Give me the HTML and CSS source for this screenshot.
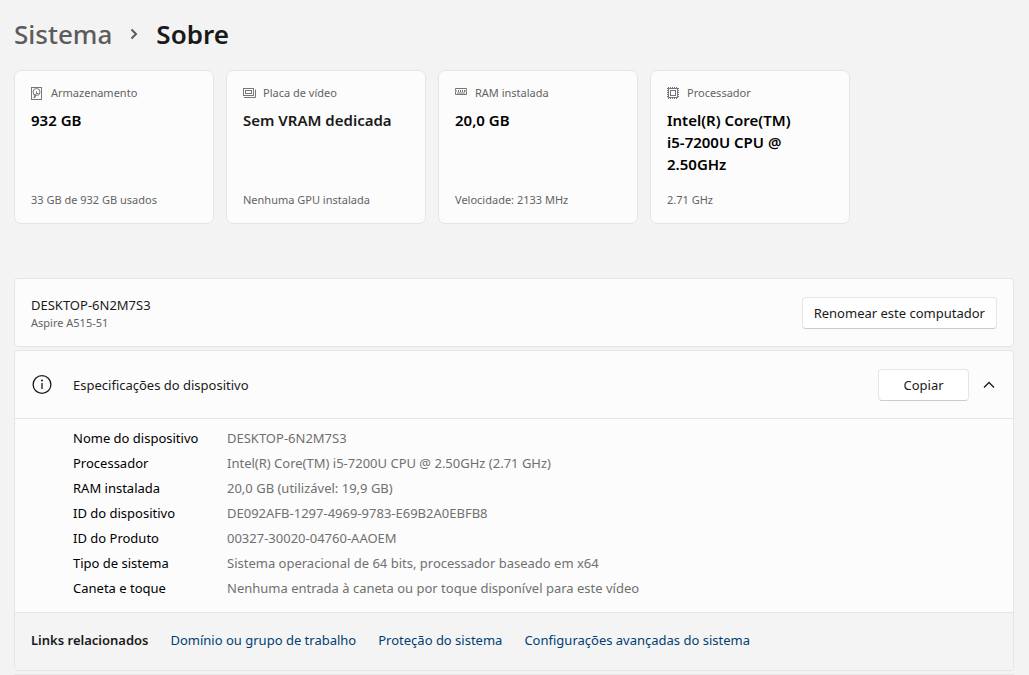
FILE: index.html
```html
<!DOCTYPE html>
<html lang="pt-BR">
<head>
  <meta charset="UTF-8" />
  <meta name="viewport" content="width=device-width, initial-scale=1.0" />
  <title>Sistema - Sobre</title>
  <link rel="stylesheet" href="styles.css">
</head>
<body>
  <main class="page">
    <header class="breadcrumb">
      <a class="breadcrumb-parent" href="#">Sistema</a>
      <svg class="breadcrumb-arrow" width="10" height="14" viewBox="0 0 10 14" aria-hidden="true">
        <path d="M2.5 2.5 7 7l-4.5 4.5" />
      </svg>
      <h1>Sobre</h1>
    </header>

    <section class="cards" aria-label="Resumo do hardware">
      <article class="card">
        <p class="card-label">
          <svg class="card-icon" width="12" height="14" viewBox="0 0 12 14" aria-hidden="true">
            <rect x="0.5" y="1.5" width="10" height="12" />
            <circle cx="5.5" cy="6" r="3.5" />
            <path d="M5.5 5.5v2h2M5.5 7.5 2.5 12M2.500 8.500l2 1.500-1 2" />
          </svg>
          Armazenamento
        </p>
        <h2>932 GB</h2>
        <p class="card-note">33 GB de 932 GB usados</p>
      </article>
      <article class="card">
        <p class="card-label">
          <svg class="card-icon" width="12" height="14" viewBox="0 0 12 14" aria-hidden="true">
            <rect x="0.5" y="2.5" width="10" height="7" />
            <rect x="2.5" y="4.5" width="6" height="3" />
            <path d="M1 11.500h11.500v-8" />
          </svg>
          Placa de vídeo
        </p>
        <h2 class="soft">Sem VRAM dedicada</h2>
        <p class="card-note">Nenhuma GPU instalada</p>
      </article>
      <article class="card">
        <p class="card-label">
          <svg class="card-icon" width="12" height="14" viewBox="0 0 12 14" aria-hidden="true">
            <path d="M.5 2.500h11v2l-1 .5 1 .5v3H.5v-3l1-.5-1-.5z" />
            <path d="M3.500 4v2M5.500 4v2M7.500 4v2M9.500 4v2M2 7h8" />
          </svg>
          RAM instalada
        </p>
        <h2>20,0 GB</h2>
        <p class="card-note">Velocidade: 2133 MHz</p>
      </article>
      <article class="card">
        <p class="card-label">
          <svg class="card-icon" width="12" height="14" viewBox="0 0 12 14" aria-hidden="true">
            <rect x="1.500" y="2.500" width="9" height="9" />
            <rect x="3.500" y="4.500" width="5" height="5" />
            <path stroke-dasharray="1 1" d="M1 1.500h10M1 12.500h10M.5 2v10M11.500 2v10" />
          </svg>
          Processador
        </p>
        <h2>Intel(R) Core(TM)<br>i5-7200U CPU @ 2.50GHz</h2>
        <p class="card-note">2.71 GHz</p>
      </article>
    </section>

    <section class="panel panel-row">
      <div class="device">
        <p class="device-name">DESKTOP-6N2M7S3</p>
        <p class="device-model">Aspire A515-51</p>
      </div>
      <button class="btn" type="button">Renomear este computador</button>
    </section>

    <section class="panel">
      <div class="panel-row specs-header">
        <svg class="info-icon" width="22" height="22" viewBox="0 0 22 22" aria-hidden="true">
          <circle cx="11" cy="10.500" r="8.900" />
          <path d="M11 9v6" />
          <circle class="dot" cx="11" cy="6.500" r="1" />
        </svg>
        <h3>Especificações do dispositivo</h3>
        <button class="btn btn-copy" type="button">Copiar</button>
        <button class="toggle" type="button" aria-label="Recolher" aria-expanded="true">
          <svg width="14" height="10" viewBox="0 0 14 10" aria-hidden="true">
            <path d="M2 7.500 7 2.500l5 5" />
          </svg>
        </button>
      </div>

      <table class="specs">
        <tbody>
          <tr><th scope="row">Nome do dispositivo</th><td>DESKTOP-6N2M7S3</td></tr>
          <tr><th scope="row">Processador</th><td>Intel(R) Core(TM) i5-7200U CPU @ 2.50GHz (2.71 GHz)</td></tr>
          <tr><th scope="row">RAM instalada</th><td>20,0 GB (utilizável: 19,9 GB)</td></tr>
          <tr><th scope="row">ID do dispositivo</th><td>DE092AFB-1297-4969-9783-E69B2A0EBFB8</td></tr>
          <tr><th scope="row">ID do Produto</th><td>00327-30020-04760-AAOEM</td></tr>
          <tr><th scope="row">Tipo de sistema</th><td>Sistema operacional de 64 bits, processador baseado em x64</td></tr>
          <tr><th scope="row">Caneta e toque</th><td>Nenhuma entrada à caneta ou por toque disponível para este vídeo</td></tr>
        </tbody>
      </table>

      <nav class="links" aria-label="Links relacionados">
        <strong>Links relacionados</strong>
        <a href="#">Domínio ou grupo de trabalho</a>
        <a href="#">Proteção do sistema</a>
        <a href="#">Configurações avançadas do sistema</a>
      </nav>
    </section>

    <!-- top edge of the next panel -->
    <section class="panel-next"></section>
  </main>
</body>
</html>
```

FILE: styles.css
```css
:root {
  --bg: #f3f3f3;
  --surface: #fcfcfc;
  --line: #e5e5e5;
  --text: #1a1a1a;
  --muted: #636363;
  --link: #003e73;
}

* {
  box-sizing: border-box;
}

body {
  margin: 0;
  background: var(--bg);
  color: var(--text);
  font-family: "Noto Sans", "Open Sans", sans-serif;
  font-size: 13px;
  line-height: 20px;
}

h1, h2, h3, p {
  margin: 0;
}

svg {
  flex: none;
  fill: none;
  stroke: currentColor;
}

.page {
  padding: 16px 15px 0 14px;
}

.breadcrumb {
  display: flex;
  align-items: center;
  gap: 17px;
  height: 36px;
  margin-bottom: 18px;
  font-size: 26px;
  line-height: 36px;
}

.breadcrumb-parent {
  color: #5c5c5c;
  font-weight: 500;
  text-decoration: none;
}

.breadcrumb-arrow {
  color: #5c5c5c;
  stroke-width: 2;
}

.breadcrumb h1 {
  font-size: 26px;
  font-weight: 600;
}

.cards {
  display: grid;
  grid-template-columns: repeat(auto-fill, 200px);
  gap: 12px;
  margin-bottom: 54px;
}

.card {
  display: flex;
  flex-direction: column;
  min-height: 154px;
  padding: 12px 16px 13px;
  background: var(--surface);
  border: 1px solid var(--line);
  border-radius: 7px;
}

.card-label {
  display: flex;
  align-items: center;
  gap: 8px;
  color: var(--muted);
  font-size: 11px;
}

.card-icon {
  overflow: visible;
  color: #777;
}

.card h2 {
  margin-top: 6px;
  color: #000;
  font-size: 15px;
  font-weight: 600;
  line-height: 22px;
}

.card h2.soft {
  color: var(--text);
}

.card-note {
  margin-top: auto;
  color: var(--muted);
  font-size: 11px;
}

.panel {
  margin-bottom: 3px;
  background: var(--surface);
  border: 1px solid var(--line);
  border-radius: 4px;
  overflow: hidden;
}

.panel-row {
  display: flex;
  align-items: center;
  min-height: 69px;
  padding: 0 16px;
}

.device {
  flex: 1;
  padding-top: 2px;
}

.device-name {
  line-height: 18px;
}

.device-model {
  color: var(--muted);
  font-size: 11px;
  line-height: 18px;
}

.btn {
  height: 32px;
  padding: 0 11px;
  background: #fff;
  border: 1px solid var(--line);
  border-bottom-color: #ccc;
  border-radius: 4px;
  color: var(--text);
  font: inherit;
}

.specs-header {
  min-height: 68px;
  border-bottom: 1px solid var(--line);
}

.info-icon {
  margin-right: 20px;
  stroke-width: 1.3;
}

.info-icon .dot {
  fill: currentColor;
  stroke: none;
}

.specs-header h3 {
  flex: 1;
  font-size: 13px;
  font-weight: 400;
}

.btn-copy {
  width: 91px;
}

.toggle {
  display: flex;
  margin: 0 1px 0 13px;
  padding: 0;
  background: none;
  border: 0;
  color: inherit;
  stroke-width: 1.3;
}

.specs {
  margin: 6px 58px 12px;
  border-collapse: collapse;
}

.specs th,
.specs td {
  height: 25px;
  padding: 0;
  text-align: left;
}

.specs th {
  width: 154px;
  color: #000;
  font-weight: 400;
}

.specs td {
  color: #707070;
}

.links {
  display: flex;
  align-items: center;
  flex-wrap: wrap;
  gap: 0 22px;
  min-height: 58px;
  padding: 0 16px 4px;
  background: #f4f4f4;
  border-top: 1px solid var(--line);
}

.links strong {
  font-weight: 600;
}

.links a {
  color: var(--link);
  text-decoration: none;
}

.panel-next {
  border-top: 1px solid var(--line);
}
```
